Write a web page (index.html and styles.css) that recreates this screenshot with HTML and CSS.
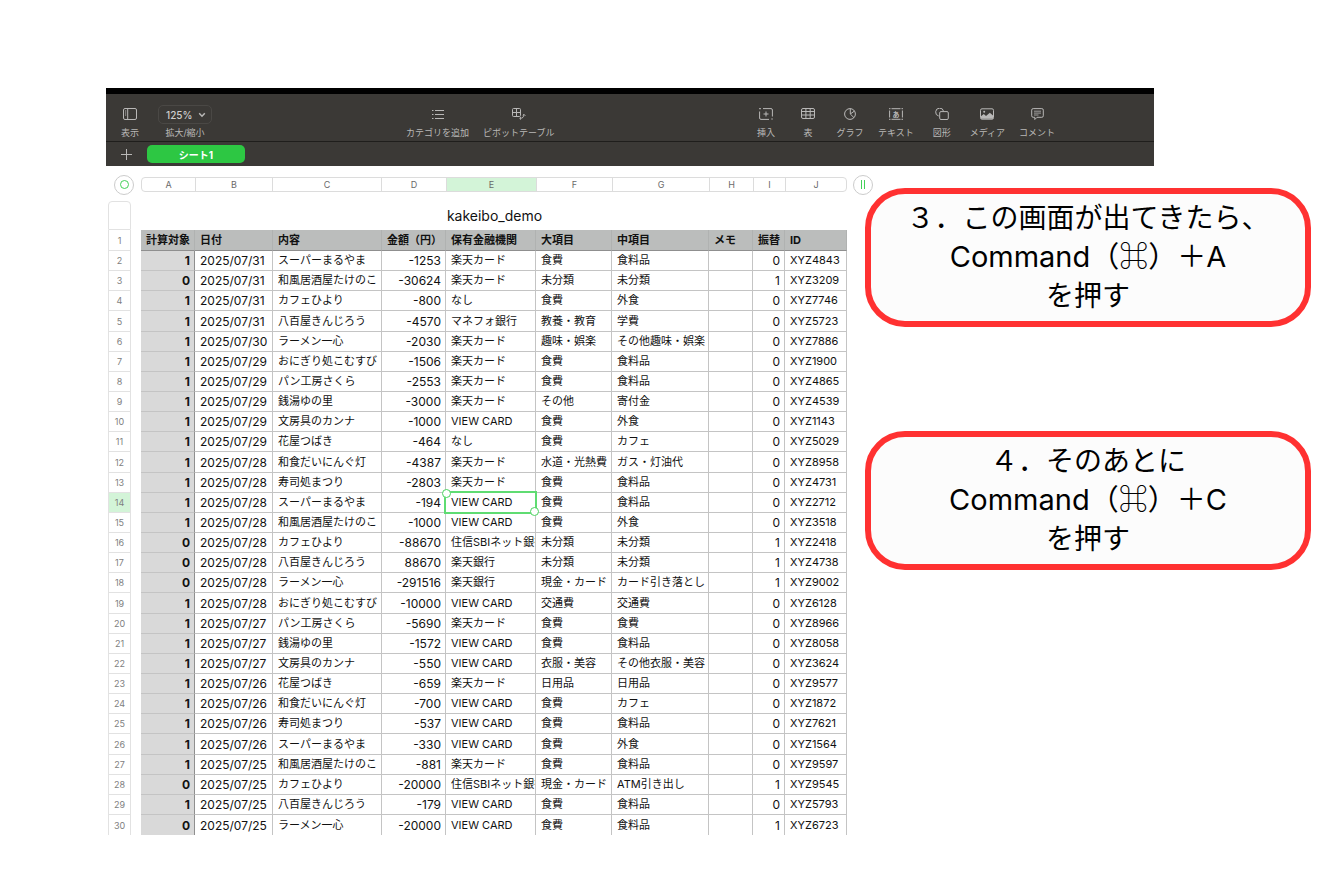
FILE: index.html
```html
<!DOCTYPE html>
<html lang="ja">
<head>
    <meta charset="UTF-8">
    <meta name="viewport" content="width=device-width, initial-scale=1.0">
    <title>kakeibo_demo</title>
    <link rel="stylesheet" href="styles.css">
</head>
<body>
    <header class="app-header">
        <div class="toolbar">
            <div class="group">
                <button class="tool">
                    <svg width="14" height="12" viewBox="0 0 14 12"><rect x="0.5" y="0.5" width="13" height="11" rx="1.5"/><path d="M4.7 0.5v11M2 3h1.2M2 5h1.2M2 7h1.2"/></svg>
                    <span>表示</span>
                </button>
                <div class="tool">
                    <div class="zoom-box">
                        <select id="zoom"><option>125%</option></select>
                        <svg class="chevron" width="8" height="6" viewBox="0 0 8 6"><path d="M1.2 1.3L4 4.2L6.8 1.3"/></svg>
                    </div>
                    <label for="zoom">拡大/縮小</label>
                </div>
            </div>
            <div class="group">
                <button class="tool">
                    <svg width="12" height="12" viewBox="0 0 12 12"><path d="M3 2.5h9M3 6.5h9M3 10.5h9M0 2.5h1.5M0 6.5h1.5M0 10.5h1.5"/></svg>
                    <span>カテゴリを追加</span>
                </button>
                <button class="tool">
                    <svg width="14" height="12" viewBox="0 0 14 12"><rect x="0.5" y="0.5" width="8" height="8" rx="1"/><path d="M4.5 0.5v8M0.5 4.5h8M12 6.8c0 2.2-1.5 3.5-4 3.6M10.7 7.6L12 6.3L13.3 7.6M9 9.2L7.7 10.4L9 11.6"/></svg>
                    <span>ピボットテーブル</span>
                </button>
            </div>
            <div class="group">
                <button class="tool">
                    <svg width="14" height="12" viewBox="0 0 14 12"><path d="M4 0.6h8a1.4 1.4 0 0 1 1.4 1.4v6.5M10 11.4H2A1.4 1.4 0 0 1 0.6 10V3.5M7 3.5v5M4.5 6h5M0 0.7h2M12.3 11h1.5"/></svg>
                    <span>挿入</span>
                </button>
                <button class="tool">
                    <svg width="14" height="12" viewBox="0 0 14 12"><rect x="0.5" y="0.5" width="13" height="10" rx="1.5"/><path d="M0.5 3.5h13M0.5 7h13M4.9 0.5v10M9.2 0.5v10"/></svg>
                    <span>表</span>
                </button>
                <button class="tool">
                    <svg width="12" height="12" viewBox="0 0 12 12"><circle cx="6" cy="6" r="5.4"/><path d="M6.3 0.6V6L10 9.7M6.3 6L10.5 3"/></svg>
                    <span>グラフ</span>
                </button>
                <button class="tool">
                    <svg width="14" height="12" viewBox="0 0 14 12"><path d="M2.5 0.7h9M2.5 11.3h9M0.6 2.5v7M13.4 2.5v7M0 0.7h1.5M12.5 0.7H14M0 11.3h1.5M12.5 11.3H14"/><text x="7" y="8.5" text-anchor="middle">あ</text></svg>
                    <span>テキスト</span>
                </button>
                <button class="tool">
                    <svg width="14" height="12" viewBox="0 0 14 12"><path d="M3.7 8A4 4 0 1 1 8.6 3.4"/><rect x="4.7" y="3.6" width="8.6" height="7.9" rx="1.3"/></svg>
                    <span>図形</span>
                </button>
                <button class="tool">
                    <svg width="14" height="12" viewBox="0 0 14 12"><rect x="0.5" y="0.8" width="13" height="10.4" rx="1.5"/><path class="solid" d="M1 10.8V8.3L3.8 6L6 8L9.8 4.8L13 7.6V10.8Z"/><circle class="solid" cx="4.2" cy="3.8" r="1"/></svg>
                    <span>メディア</span>
                </button>
                <button class="tool">
                    <svg width="13" height="12" viewBox="0 0 13 12"><path d="M2.2 0.6h8.6a1.5 1.5 0 0 1 1.5 1.5v5.7a1.5 1.5 0 0 1-1.5 1.5H6L3.8 11.5V9.3H2.2a1.5 1.5 0 0 1-1.5-1.5V2.1a1.5 1.5 0 0 1 1.5-1.5z"/><path class="fine" d="M3 3.2h7M3 5.1h7M3 7h4.5"/></svg>
                    <span>コメント</span>
                </button>
            </div>
        </div>
        <nav class="tabs">
            <button class="add-sheet" aria-label="シートを追加"><svg width="11" height="11" viewBox="0 0 11 11"><path d="M5.5 0v11M0 5.5h11"/></svg></button>
            <button class="tab">シート1</button>
        </nav>
    </header>

    <div class="workspace">
        <main class="sheet">
            <div class="columns">
                <button class="round" aria-label="表を選択"><span class="ring"></span></button>
                <div class="letters">
                    <span>A</span><span>B</span><span>C</span><span>D</span><span class="active">E</span><span>F</span><span>G</span><span>H</span><span>I</span><span>J</span>
                </div>
                <button class="round" aria-label="列を追加"><span class="bars"></span></button>
            </div>
            <table>
                <colgroup>
                    <col class="c-no"><col class="c-gap"><col class="c-a"><col class="c-b"><col class="c-c"><col class="c-d"><col class="c-e"><col class="c-f"><col class="c-g"><col class="c-h"><col class="c-i"><col class="c-j">
                </colgroup>
                <thead>
                    <tr class="title-row">
                        <td class="no"></td><td></td>
                        <td class="title" colspan="10">kakeibo_demo</td>
                    </tr>
                    <tr class="head-row">
                        <th class="no">1</th><td></td>
                        <th class="num">計算対象</th><th>日付</th><th>内容</th><th class="num">金額（円）</th><th>保有金融機関</th><th>大項目</th><th>中項目</th><th>メモ</th><th class="num">振替</th><th>ID</th>
                    </tr>
                </thead>
                <tbody id="rows"></tbody>
            </table>
        </main>

        <aside class="steps">
            <p class="step">３．この画面が出てきたら、<br><span class="keys">Command（<span class="cmd">⌘</span>）＋A</span><br>を押す</p>
            <p class="step">４．そのあとに<br><span class="keys">Command（<span class="cmd">⌘</span>）＋C</span><br>を押す</p>
        </aside>
    </div>

    <script>
        const shops = ['スーパーまるやま', '和風居酒屋たけのこ', 'カフェひより', '八百屋きんじろう', 'ラーメン一心',
            'おにぎり処こむすび', 'パン工房さくら', '銭湯ゆの里', '文房具のカンナ', '花屋つばき', '和食だいにんぐ灯', '寿司処まつり'];

        // 計算対象, 日, 金額, 保有金融機関, 大項目, 中項目, 振替, ID
        const data = [
            [1, '31', -1253, '楽天カード', '食費', '食料品', 0, 'XYZ4843'],
            [0, '31', -30624, '楽天カード', '未分類', '未分類', 1, 'XYZ3209'],
            [1, '31', -800, 'なし', '食費', '外食', 0, 'XYZ7746'],
            [1, '31', -4570, 'マネフォ銀行', '教養・教育', '学費', 0, 'XYZ5723'],
            [1, '30', -2030, '楽天カード', '趣味・娯楽', 'その他趣味・娯楽', 0, 'XYZ7886'],
            [1, '29', -1506, '楽天カード', '食費', '食料品', 0, 'XYZ1900'],
            [1, '29', -2553, '楽天カード', '食費', '食料品', 0, 'XYZ4865'],
            [1, '29', -3000, '楽天カード', 'その他', '寄付金', 0, 'XYZ4539'],
            [1, '29', -1000, 'VIEW CARD', '食費', '外食', 0, 'XYZ1143'],
            [1, '29', -464, 'なし', '食費', 'カフェ', 0, 'XYZ5029'],
            [1, '28', -4387, '楽天カード', '水道・光熱費', 'ガス・灯油代', 0, 'XYZ8958'],
            [1, '28', -2803, '楽天カード', '食費', '食料品', 0, 'XYZ4731'],
            [1, '28', -194, 'VIEW CARD', '食費', '食料品', 0, 'XYZ2712'],
            [1, '28', -1000, 'VIEW CARD', '食費', '外食', 0, 'XYZ3518'],
            [0, '28', -88670, '住信SBIネット銀行', '未分類', '未分類', 1, 'XYZ2418'],
            [0, '28', 88670, '楽天銀行', '未分類', '未分類', 1, 'XYZ4738'],
            [0, '28', -291516, '楽天銀行', '現金・カード', 'カード引き落とし', 1, 'XYZ9002'],
            [1, '28', -10000, 'VIEW CARD', '交通費', '交通費', 0, 'XYZ6128'],
            [1, '27', -5690, '楽天カード', '食費', '食費', 0, 'XYZ8966'],
            [1, '27', -1572, 'VIEW CARD', '食費', '食料品', 0, 'XYZ8058'],
            [1, '27', -550, 'VIEW CARD', '衣服・美容', 'その他衣服・美容', 0, 'XYZ3624'],
            [1, '26', -659, '楽天カード', '日用品', '日用品', 0, 'XYZ9577'],
            [1, '26', -700, 'VIEW CARD', '食費', 'カフェ', 0, 'XYZ1872'],
            [1, '26', -537, 'VIEW CARD', '食費', '食料品', 0, 'XYZ7621'],
            [1, '26', -330, 'VIEW CARD', '食費', '外食', 0, 'XYZ1564'],
            [1, '25', -881, '楽天カード', '食費', '食料品', 0, 'XYZ9597'],
            [0, '25', -20000, '住信SBIネット銀行', '現金・カード', 'ATM引き出し', 1, 'XYZ9545'],
            [1, '25', -179, 'VIEW CARD', '食費', '食料品', 0, 'XYZ5793'],
            [0, '25', -20000, 'VIEW CARD', '食費', '食料品', 1, 'XYZ6723']
        ];

        // 店名は12行ごとに先頭へ戻る
        document.getElementById('rows').innerHTML = data.map((r, i) => {
            const [target, day, amount, bank, major, minor, transfer, id] = r;
            const no = i + 2;
            const selected = no === 14;
            return `<tr>
                <th class="no${selected ? ' active' : ''}">${no}</th><td></td>
                <th class="target num">${target}</th>
                <td class="date">2025/07/${day}</td>
                <td>${shops[i % 12]}</td>
                <td class="num">${amount}</td>
                <td class="${selected ? 'selected' : ''}">${bank}${selected ? '<span class="frame"></span>' : ''}</td>
                <td>${major}</td>
                <td>${minor}</td>
                <td></td>
                <td class="num">${transfer}</td>
                <td>${id}</td>
            </tr>`;
        }).join('');
    </script>
</body>
</html>
```
FILE: styles.css
```css
* {
    box-sizing: border-box;
}
body {
    margin: 0;
    padding: 88px 9px 46px 106px;
    background-color: #fff;
    color: #111;
    font-family: Inter, "Noto Sans CJK JP", sans-serif;
}
button, select {
    font-family: inherit;
    background: none;
    border: none;
    padding: 0;
    margin: 0;
    color: inherit;
}
svg {
    display: block;
    fill: none;
    stroke: currentColor;
}

/* toolbar */
.app-header {
    margin-right: 157px;
    background-color: #3b3936;
    border-top: 6px solid #000;
    color: #b9b8b7;
}
.toolbar {
    display: grid;
    grid-template-columns: 300fr 346fr 402fr;
    height: 48px;
    border-bottom: 1px solid #1f1e1c;
}
.group {
    display: flex;
    align-items: flex-start;
    gap: 14px;
    padding-top: 10px;
}
.group:first-child {
    padding-left: 10px;
}
.tool {
    display: flex;
    flex-direction: column;
    align-items: center;
    min-width: 28px;
    font-size: 9px;
    line-height: 14px;
    white-space: nowrap;
}
.tool > svg {
    margin: 4px 0 6px;
}
.tool text {
    font-size: 7px;
    font-weight: bold;
    fill: currentColor;
    stroke: none;
}
.solid {
    fill: currentColor;
    stroke: none;
}
.fine {
    stroke-width: 0.8;
}
.zoom-box {
    position: relative;
    margin: 1px 0 2px;
}
.zoom-box select {
    appearance: none;
    display: block;
    width: 54px;
    height: 19px;
    padding-left: 7px;
    border: 1px solid #4a4845;
    border-radius: 5px;
    font-size: 10px;
    font-weight: 500;
    color: #cfcecd;
}
.chevron {
    position: absolute;
    right: 6px;
    top: 7px;
    stroke-width: 1.5;
    pointer-events: none;
}
.tabs {
    display: flex;
    align-items: center;
    height: 24px;
}
.add-sheet {
    width: 41px;
    display: flex;
    justify-content: center;
}
.tab {
    width: 98px;
    height: 18px;
    border-radius: 5px;
    background-color: #2dc743;
    color: #fff;
    font-size: 10px;
    font-weight: bold;
}

/* sheet */
.workspace {
    display: flex;
    align-items: flex-start;
}
.sheet {
    width: 759px;
    flex-shrink: 0;
    padding: 11px 0 0 2px;
}
.columns {
    display: flex;
    align-items: center;
    height: 15px;
    margin-bottom: 9px;
    padding-left: 6px;
}
.round {
    display: flex;
    align-items: center;
    justify-content: center;
    width: 20px;
    height: 20px;
    flex-shrink: 0;
    border: 1px solid #ccc;
    border-radius: 50%;
}
.ring {
    width: 9px;
    height: 9px;
    border: 1px solid #43d158;
    border-radius: 50%;
}
.bars {
    width: 4px;
    height: 9px;
    border: solid #43d158;
    border-width: 0 1px;
}
.letters {
    display: grid;
    grid-template-columns: 53px 77px 109px 65px 90px 76px 97px 44px 32px 1fr;
    width: 706px;
    flex-shrink: 0;
    margin: 0 6px 0 7px;
    border: 1px solid #dcdcdc;
    border-radius: 4px;
    font-size: 9px;
    line-height: 13px;
    color: #6a6a6a;
    text-align: center;
}
.letters span + span {
    border-left: 1px solid #dcdcdc;
}
.letters .active, .no.active {
    background-color: #d3f4d8;
}
table {
    width: 739px;
    table-layout: fixed;
    border-collapse: separate;
    border-spacing: 0;
    font-size: 11px;
    line-height: 19px;
}
.c-no { width: 23px; }
.c-gap { width: 10px; }
.c-a { width: 54px; }
.c-b { width: 78px; }
.c-c { width: 109px; }
.c-d { width: 64px; }
.c-e { width: 90px; }
.c-f { width: 76px; }
.c-g { width: 97px; }
.c-h { width: 44px; }
.c-i { width: 32px; }
.c-j { width: 62px; }
tr {
    height: 20px;
}
.head-row, tbody tr:nth-child(7n + 4) {
    height: 21px;
}
td, th {
    padding: 0 4px 0 5px;
    text-align: left;
    white-space: nowrap;
    overflow: hidden;
    border: solid #c4c4c4;
    border-width: 0 1px 1px 0;
}
tr > :nth-child(2) {
    border: none;
}
tbody tr:last-child > * {
    border-bottom: none;
}
.no {
    padding: 0;
    border: solid #e2e2e2;
    border-width: 0 1px 1px;
    color: #808080;
    font-size: 9px;
    font-weight: normal;
    text-align: center;
}
.title-row {
    height: 29px;
}
.title-row .no {
    border-top-width: 1px;
    border-radius: 4px 4px 0 0;
}
.title {
    border: none;
    font-size: 14px;
    text-align: center;
}
.head-row th:not(.no) {
    background-color: #bbbdbc;
    border-color: #b0b2b1;
    border-bottom-color: #8f8f8f;
}
.num {
    text-align: right;
}
tbody .num, .date {
    font-size: 12px;
}
.target {
    background-color: #d9d9d9;
    border-right-color: #8f8f8f;
}

/* selected cell: frame with two round handles */
.selected {
    position: relative;
    overflow: visible;
}
.frame {
    position: absolute;
    inset: -2px;
    border: 2px solid #5fdc72;
    z-index: 1;
}
.frame::before, .frame::after {
    content: "";
    position: absolute;
    width: 7px;
    height: 7px;
    border: 1px solid #4bd45f;
    border-radius: 50%;
    background-color: #fff;
}
.frame::before {
    left: -4px;
    top: -4px;
}
.frame::after {
    right: -4px;
    bottom: -4px;
}

/* callouts */
.steps {
    flex: 1;
    display: flex;
    flex-direction: column;
    gap: 104px;
    padding-top: 22px;
}
.step {
    margin: 0;
    padding: 5px 10px;
    border: 6px solid #ff3131;
    border-radius: 40px;
    background-color: #fcfcfc;
    color: #000;
    font-size: 28px;
    line-height: 39px;
    text-align: center;
    white-space: nowrap;
}
.keys {
    font-size: 29px;
    line-height: 1;
}
.cmd {
    font-family: "Noto Sans CJK JP", sans-serif;
    font-weight: 300;
}
```
